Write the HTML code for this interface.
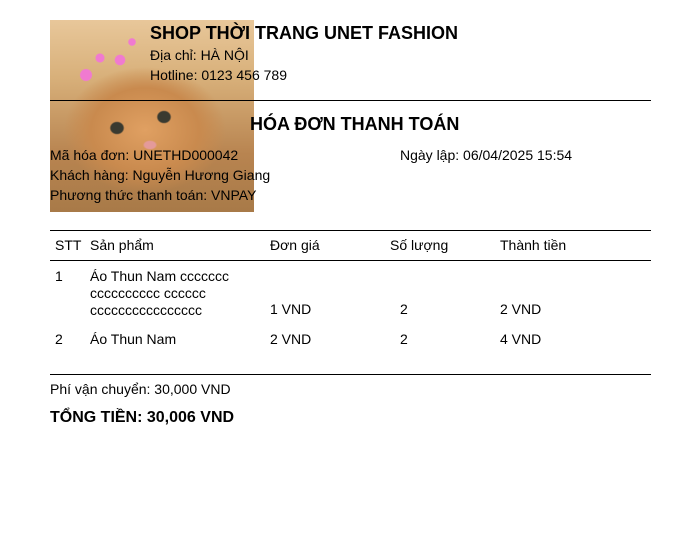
<!DOCTYPE html>
<html><head><meta charset="utf-8"><style>
body{margin:0;width:700px;height:550px;background:#fff;font-family:"Liberation Sans",sans-serif;color:#000;position:relative;overflow:hidden}
.a{position:absolute;white-space:nowrap}
.img{position:absolute;left:50px;top:20px;width:204px;height:192px;
background:
radial-gradient(ellipse 10px 9px at 114px 97px,#3a3a30 60%,transparent 75%),
radial-gradient(ellipse 10px 9px at 67px 108px,#3a3a30 60%,transparent 75%),
radial-gradient(ellipse 9px 6px at 100px 125px,#e49a9a 60%,transparent 80%),
radial-gradient(circle 8px at 36px 55px,#f07ad0 70%,transparent 80%),
radial-gradient(circle 7px at 70px 40px,#f07ad0 70%,transparent 80%),
radial-gradient(circle 6px at 50px 38px,#f07ad0 70%,transparent 80%),
radial-gradient(circle 5px at 82px 22px,#f07ad0 70%,transparent 80%),
radial-gradient(ellipse 90px 70px at 95px 110px,#e0a062 0%,#c98a4e 60%,transparent 90%),
linear-gradient(180deg,#e8c79a 0%,#d8b07a 30%,#b88450 70%,#a87a48 100%);}
</style></head><body>
<div class="img"></div>
<div class="a" style="left:150px;top:23px;font-size:18px;font-weight:bold">SHOP THỜI TRANG UNET FASHION</div>
<div class="a" style="left:150px;top:47px;font-size:14px">Địa chỉ: HÀ NỘI</div>
<div class="a" style="left:150px;top:67px;font-size:14px">Hotline: 0123 456 789</div>
<div class="a" style="left:50px;top:100px;width:601px;border-top:1px solid #000"></div>
<div class="a" style="left:250px;top:114px;font-size:18px;font-weight:bold">HÓA ĐƠN THANH TOÁN</div>
<div class="a" style="left:50px;top:147px;font-size:14px">Mã hóa đơn: UNETHD000042</div>
<div class="a" style="left:400px;top:147px;font-size:14px">Ngày lập: 06/04/2025 15:54</div>
<div class="a" style="left:50px;top:167px;font-size:14px">Khách hàng: Nguyễn Hương Giang</div>
<div class="a" style="left:50px;top:187px;font-size:14px">Phương thức thanh toán: VNPAY</div>
<div class="a" style="left:50px;top:230px;width:601px;border-top:1px solid #000"></div>
<div class="a" style="left:50px;top:260px;width:601px;border-top:1px solid #000"></div>
<div class="a" style="left:55px;top:237px;font-size:14px">STT</div>
<div class="a" style="left:90px;top:237px;font-size:14px">Sản phẩm</div>
<div class="a" style="left:270px;top:237px;font-size:14px">Đơn giá</div>
<div class="a" style="left:390px;top:237px;font-size:14px">Số lượng</div>
<div class="a" style="left:500px;top:237px;font-size:14px">Thành tiền</div>
<div class="a" style="left:55px;top:268px;font-size:14px">1</div>
<div class="a" style="left:90px;top:268px;font-size:14px;line-height:17px">Áo Thun Nam ccccccc<br>cccccccccc cccccc<br>cccccccccccccccc</div>
<div class="a" style="left:270px;top:301px;font-size:14px">1 VND</div>
<div class="a" style="left:400px;top:301px;font-size:14px">2</div>
<div class="a" style="left:500px;top:301px;font-size:14px">2 VND</div>
<div class="a" style="left:55px;top:331px;font-size:14px">2</div>
<div class="a" style="left:90px;top:331px;font-size:14px">Áo Thun Nam</div>
<div class="a" style="left:270px;top:331px;font-size:14px">2 VND</div>
<div class="a" style="left:400px;top:331px;font-size:14px">2</div>
<div class="a" style="left:500px;top:331px;font-size:14px">4 VND</div>
<div class="a" style="left:50px;top:374px;width:601px;border-top:1px solid #000"></div>
<div class="a" style="left:50px;top:381px;font-size:14px">Phí vận chuyển: 30,000 VND</div>
<div class="a" style="left:50px;top:409px;font-size:16px;font-weight:bold">TỔNG TIỀN: 30,006 VND</div>
</body></html>
